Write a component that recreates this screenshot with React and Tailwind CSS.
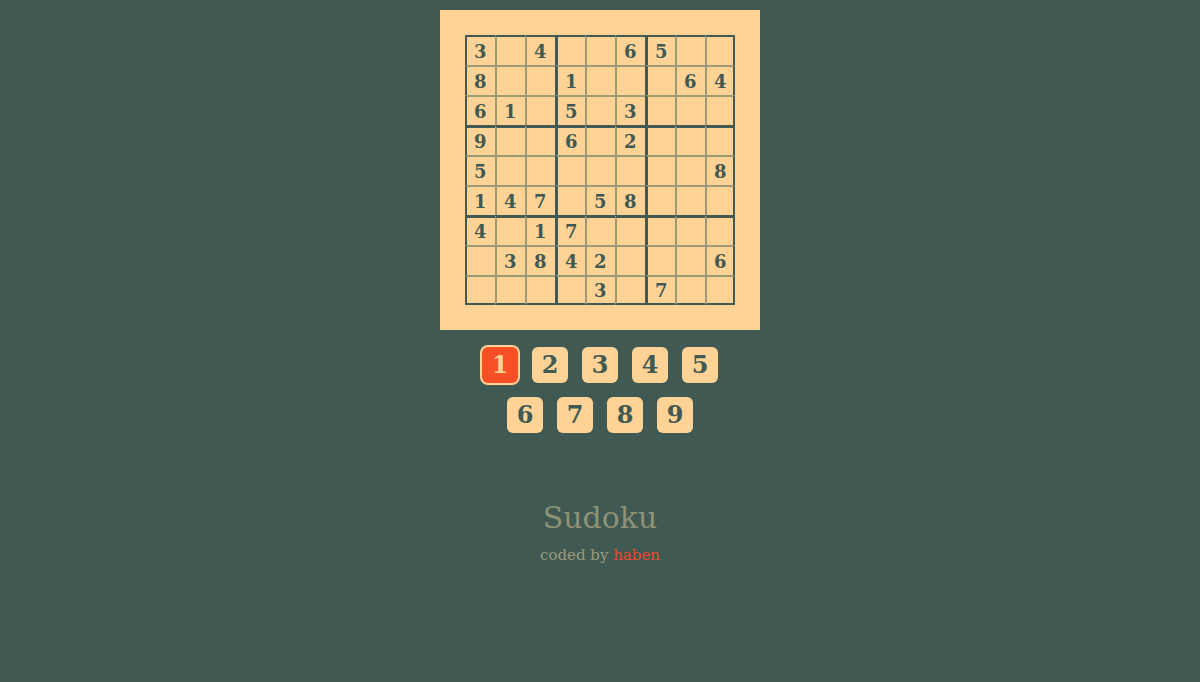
import { useState } from 'react';

const puzzle = [
  [3, 0, 4, 0, 0, 6, 5, 0, 0],
  [8, 0, 0, 1, 0, 0, 0, 6, 4],
  [6, 1, 0, 5, 0, 3, 0, 0, 0],
  [9, 0, 0, 6, 0, 2, 0, 0, 0],
  [5, 0, 0, 0, 0, 0, 0, 0, 8],
  [1, 4, 7, 0, 5, 8, 0, 0, 0],
  [4, 0, 1, 7, 0, 0, 0, 0, 0],
  [0, 3, 8, 4, 2, 0, 0, 0, 6],
  [0, 0, 0, 0, 3, 0, 7, 0, 0],
];

const font = { fontFamily: '"DejaVu Serif", "Liberation Serif", serif' };

function cellBorders(r, c) {
  const cls = [];
  if (c === 0) cls.push('border-l-2 border-l-[#405952]');
  else if (c === 3 || c === 6) cls.push('border-l-[3px] border-l-[#405952]');
  else cls.push('border-l-2 border-l-[#9b9b78]');
  if (c === 8) cls.push('border-r-2 border-r-[#405952]');

  if (r === 0) cls.push('border-t-2 border-t-[#405952]');
  else if (r === 3 || r === 6) cls.push('border-t-[3px] border-t-[#405952]');
  else cls.push('border-t-2 border-t-[#9b9b78]');
  if (r === 8) cls.push('border-b-2 border-b-[#405952]');
  return cls.join(' ');
}

function Board() {
  return (
    <div className="w-[320px] h-[320px] bg-[#ffd395] p-[25px]">
      <div className="grid grid-cols-9">
        {puzzle.map((row, r) =>
          row.map((n, c) => (
            <div
              key={r + '-' + c}
              className={
                'box-border h-[30px] flex items-center pl-[7px] text-[18px] font-bold text-[#405952] ' +
                cellBorders(r, c)
              }
            >
              {n ? n : ''}
            </div>
          ))
        )}
      </div>
    </div>
  );
}

export default function App() {
  const [active, setActive] = useState(1);

  return (
    <div className="min-h-screen bg-[#405952] flex flex-col items-center pt-[10px]" style={font}>
      <Board />

      {/* number picker */}
      <div className="w-[250px] pt-[10px] flex flex-wrap justify-center">
        {[1, 2, 3, 4, 5, 6, 7, 8, 9].map((n) => (
          <button
            key={n}
            onClick={() => setActive(n)}
            className={
              'm-[7px] w-[36px] h-[36px] rounded-[6px] flex items-center justify-center text-[24px] font-bold leading-none ' +
              (active === n
                ? 'bg-[#f94f26] text-[#ffd395] ring-2 ring-[#ffd395]'
                : 'bg-[#ffd395] text-[#405952]')
            }
          >
            {n}
          </button>
        ))}
      </div>

      <h1 className="mt-[60px] text-[30px] leading-[36px] text-[#8e9277]">Sudoku</h1>
      <p className="mt-[9px] text-[15px] leading-[20px] text-[#9a9a7a]">
        coded by <span className="text-[#ec4a2a]">haben</span>
      </p>
    </div>
  );
}
